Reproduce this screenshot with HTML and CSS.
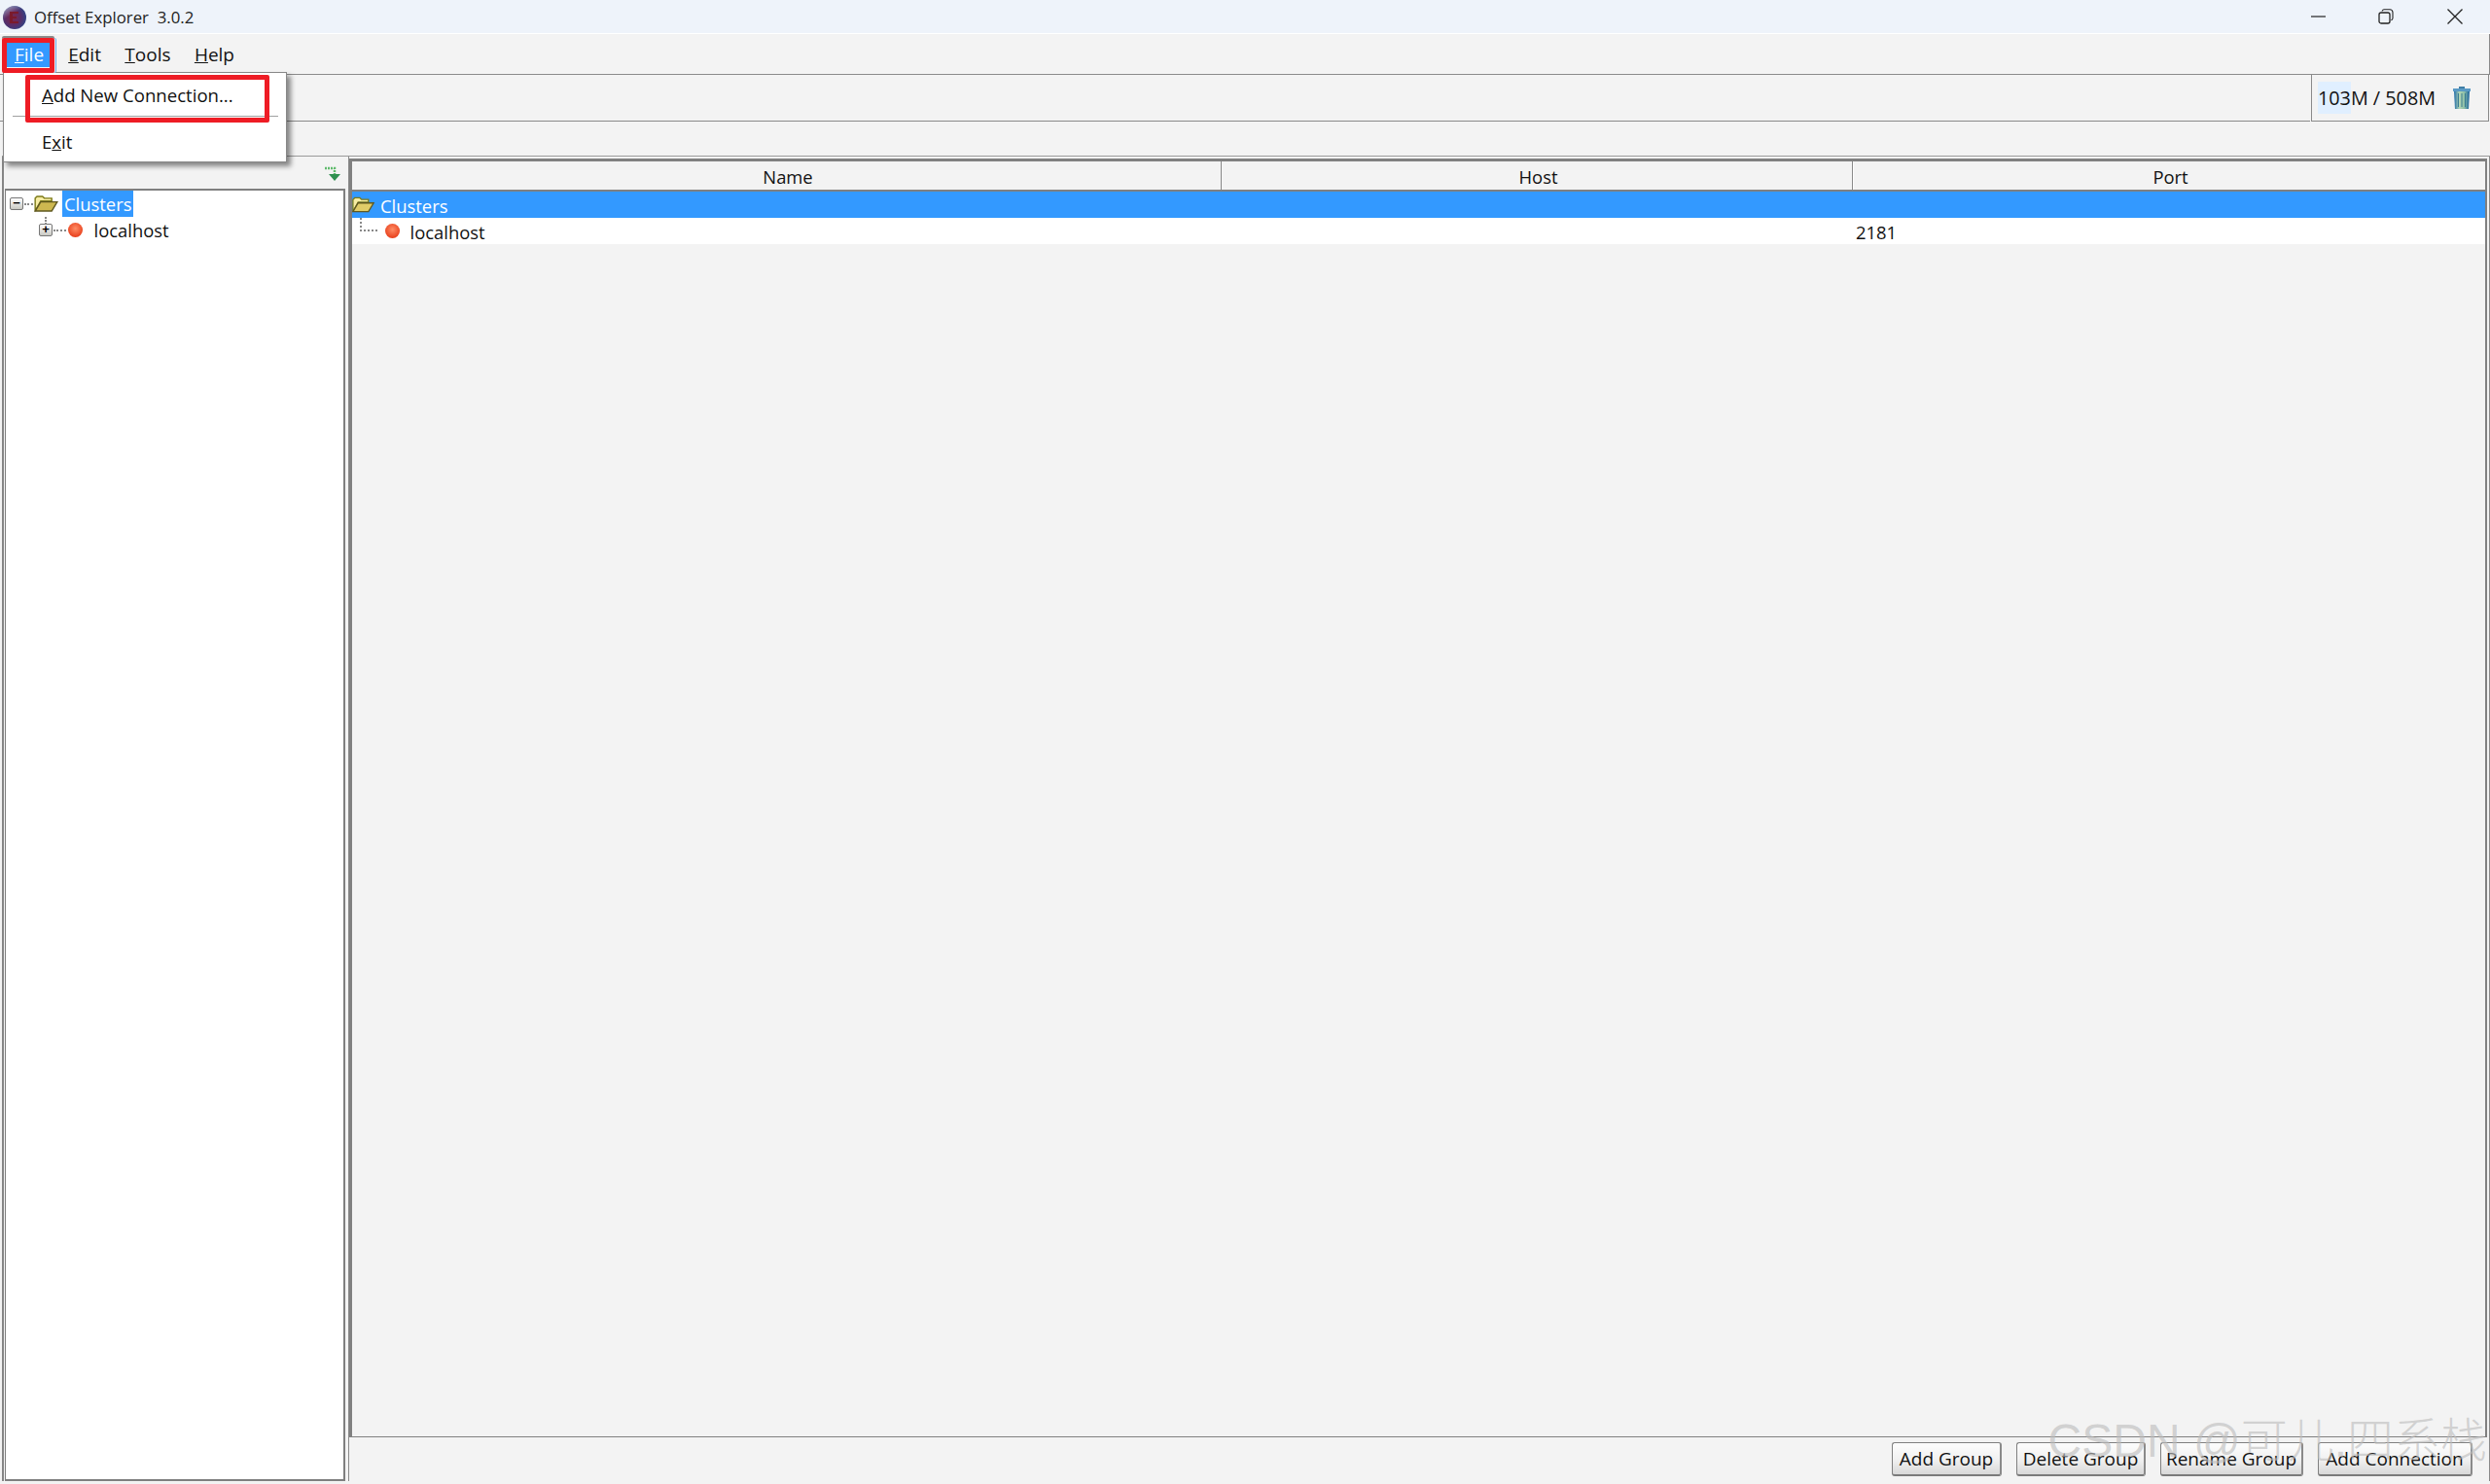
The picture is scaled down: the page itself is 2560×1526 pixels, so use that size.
FILE: index.html
```html
<!DOCTYPE html>
<html lang="en">
<head>
<meta charset="utf-8">
<title>Offset Explorer 3.0.2</title>
<link rel="stylesheet" href="styles.css">
</head>
<body>
<div class="app">
  <header class="titlebar">
    <svg class="app-icon" width="26" height="26" viewBox="0 0 26 26">
      <defs>
        <radialGradient id="orb" cx="0.42" cy="0.5" r="0.6"><stop offset="0" stop-color="#7d2648"/><stop offset="0.55" stop-color="#5a2c66"/><stop offset="1" stop-color="#2f4488"/></radialGradient>
        <linearGradient id="sheen" x1="0" y1="0" x2="0.6" y2="1"><stop offset="0" stop-color="#cfd6e6" stop-opacity=".75"/><stop offset="0.45" stop-color="#cfd6e6" stop-opacity="0"/></linearGradient>
      </defs>
      <circle cx="13" cy="13" r="12" fill="url(#orb)"/>
      <circle cx="13" cy="13" r="12" fill="url(#sheen)"/>
      <path d="M8 7h9v2h-6v3h4v2h-4v3h6v2H8z" fill="#7a1a2c"/>
    </svg>
    <span class="title-text">Offset Explorer&nbsp; 3.0.2</span>
    <div class="win-controls">
      <svg class="win-min" width="16" height="16" viewBox="0 0 16 16"><path d="M0 8h15" stroke="#222" stroke-width="1.200" fill="none"/></svg>
      <svg class="win-max" width="16" height="16" viewBox="0 0 16 16"><rect x="1" y="4" width="11" height="11" rx="2" stroke="#222" stroke-width="1.300" fill="none"/><path d="M4 2.500q.3-1.500 2-1.700h6q2.800 0 3 3v6q-.2 1.700-1.700 2" stroke="#222" stroke-width="1.100" fill="none"/></svg>
      <svg width="16" height="16" viewBox="0 0 16 16"><path d="M.5.500l15 15M15.500.500l-15 15" stroke="#222" stroke-width="1.300" fill="none"/></svg>
    </div>
  </header>

  <nav class="menubar">
    <span class="menu-item menu-active"><u>F</u>ile</span>
    <span class="menu-item"><u>E</u>dit</span>
    <span class="menu-item"><u>T</u>ools</span>
    <span class="menu-item"><u>H</u>elp</span>
  </nav>

  <div class="toolbar">
    <div class="toolbar-fill"></div>
    <div class="memory">
      <span class="memory-text"><span class="memory-used">103</span>M / 508M</span>
      <svg class="trash" width="18" height="23" viewBox="0 0 18 23">
        <defs><linearGradient id="bin" x1="0" x2="1"><stop offset="0" stop-color="#1f6ca8"/><stop offset="0.35" stop-color="#b4d6b4"/><stop offset="0.65" stop-color="#8fc0a8"/><stop offset="1" stop-color="#17609a"/></linearGradient></defs>
        <path d="M6 0h6v2H6z" fill="#3f7ea6"/>
        <path d="M0 2h18v3H0z" fill="#5a9ac4"/>
        <path d="M1 5h16l-1 18H2z" fill="url(#bin)"/>
        <path d="M5.500 7v14M9 7v14M12.500 7v14" stroke="#3a7c92" stroke-width="1"/>
      </svg>
    </div>
  </div>

  <main class="workspace">
    <aside class="left-pane">
      <div class="left-tools">
        <svg width="16" height="16" viewBox="0 0 16 16"><path d="M0 2h10v6" stroke="#5fbb6c" stroke-width="2.500" fill="none" stroke-dasharray="2 1"/><path d="M4 8h12l-6 7z" fill="#2f9050"/></svg>
      </div>
      <div class="tree">
        <div class="tree-row tree-root">
          <span class="expander">−</span>
          <span class="dots-h"></span>
          <svg class="folder" width="25" height="17" viewBox="0 0 26 18"><path d="M1 17V3l2-2h6l2 2h8v3H7L1 17z" fill="#f7eda4" stroke="#7c7a18" stroke-width="1.500"/><path d="M1 17l6-10h18l-6 10z" fill="#cdb850" stroke="#5f5820" stroke-width="1.500"/></svg>
          <span class="tree-label tree-selected">Clusters</span>
        </div>
        <div class="tree-row tree-child">
          <span class="expander">+</span>
          <span class="dots-h wide"></span>
          <span class="orb"></span>
          <span class="tree-label child-label">localhost</span>
        </div>
      </div>
    </aside>

    <section class="right-pane">
      <div class="table-box">
        <div class="table-head">
          <div class="th th-name">Name</div>
          <div class="th th-host">Host</div>
          <div class="th th-port">Port</div>
        </div>
        <div class="row row-selected">
          <svg class="folder" width="23" height="17" viewBox="0 0 26 18"><path d="M1 17V3l2-2h6l2 2h8v3H7L1 17z" fill="#f7eda4" stroke="#7c7a18" stroke-width="1.500"/><path d="M1 17l6-10h18l-6 10z" fill="#e0cc68" stroke="#5f5820" stroke-width="1.500"/></svg>
          <span class="row-name">Clusters</span>
        </div>
        <div class="row row-plain">
          <div class="cell-name">
            <span class="elbow"></span>
            <span class="orb"></span>
            <span class="row-name-child">localhost</span>
          </div>
          <span class="row-port">2181</span>
        </div>
      </div>
      <div class="button-bar">
        <button class="btn btn-1" type="button">Add Group</button>
        <button class="btn btn-2" type="button">Delete Group</button>
        <button class="btn btn-3" type="button">Rename Group</button>
        <button class="btn btn-4" type="button">Add Connection</button>
      </div>
    </section>
  </main>

  <div class="popup">
    <div class="popup-item first"><u>A</u>dd New Connection...</div>
    <div class="popup-sep"></div>
    <div class="popup-item second">E<u>x</u>it</div>
  </div>
  <div class="mark mark-file"></div>
  <div class="mark mark-add"></div>
  <div class="watermark">CSDN @可儿.四系栈</div>
</div>
</body>
</html>
```

FILE: styles.css
```css
* { box-sizing: border-box; }
html, body { margin: 0; padding: 0; }
body {
  width: 2560px;
  height: 1526px;
  overflow: hidden;
  background: #f3f3f3;
  font-family: "Open Sans", "Noto Sans", sans-serif;
  font-size: 19px;
  color: #111;
}
.app { position: relative; width: 2560px; height: 1526px; display: flex; flex-direction: column; }

.titlebar {
  height: 35px;
  background: #eef3fa;
  display: flex;
  align-items: center;
  padding-left: 2px;
  border-bottom: 1px solid #fff;
  flex: none;
}
.app-icon { flex: none; margin-top: 1px; }
.title-text { margin-left: 7px; font-size: 16.800px; color: #222; }
.win-controls { margin-left: auto; display: flex; padding-right: 28px; align-items: center; }
.win-min { margin-right: 53px; }
.win-max { margin-right: 55px; }

.menubar {
  height: 42px;
  flex: none;
  background: #f3f3f3;
  display: flex;
  align-items: center;
  padding-left: 2px;
  border-bottom: 1px solid #8a8a8a;
  border-right: 1px solid #8a8a8a;
}
.menu-item { padding: 0 12.200px; line-height: 26px; }
.menu-active { background: #3399ff; color: #fff; height: 26px; width: 44px; margin: 0 7px 0 5px; padding: 0 0 0 8px; }

.toolbar {
  height: 48px;
  flex: none;
  display: flex;
  padding-right: 1px;
}
.toolbar-fill { flex: 1; border-bottom: 1px solid #8a8a8a; }
.memory {
  width: 183px;
  border-left: 1px solid #8a8a8a;
  border-right: 1px solid #8a8a8a;
  border-bottom: 1px solid #8a8a8a;
  margin-left: 1px;
  display: flex;
  align-items: center;
  padding-left: 6px;
}
.memory-text { font-size: 19.800px; white-space: nowrap; }
.memory-used { background: #e0efff; display: inline-block; line-height: 33px; }
.trash { margin-left: 18px; flex: none; }

.workspace {
  flex: 1;
  display: flex;
  margin: 35px 0 3px 2px;
  min-height: 0;
  border-top: 1px solid #9a9a9a;
}

.left-pane {
  width: 353px;
  flex: none;
  border-left: 2px solid #858585;
  display: flex;
  flex-direction: column;
}
.left-tools { height: 33px; display: flex; justify-content: flex-end; align-items: flex-start; padding: 10px 5px 0 0; flex: none; }
.tree {
  flex: 1;
  background: #fff;
  margin-left: 1px;
  border: 1px solid #7f7f7f;
  border-top-width: 2px;
  border-right-width: 2px;
  border-bottom-width: 2px;
}
.tree-row { display: flex; align-items: center; height: 27px; position: relative; }
.tree-root { padding-left: 4px; }
.tree-child { padding-left: 34px; }
.tree-child::before {
  content: "";
  position: absolute;
  left: 40px; top: 0;
  height: 8px;
  border-left: 2px dotted #888;
}
.expander {
  width: 14px; height: 13px;
  border: 1px solid #777;
  border-radius: 2px;
  background: linear-gradient(#fff, #c9c9c3);
  font: 700 13px/10px "Liberation Sans", sans-serif;
  color: #000;
  text-align: center;
  flex: none;
}
.dots-h { width: 9px; border-top: 2px dotted #888; margin: 0 1px; flex: none; }
.dots-h.wide { width: 13px; margin-right: 2px; }
.folder { flex: none; }
.tree-label { font-size: 18.400px; line-height: 27px; }
.tree-selected { background: #3399ff; color: #fff; padding: 0 2px; margin-left: 4px; }
.child-label { margin-left: 11.500px; }

.orb {
  display: inline-block;
  width: 15px; height: 15px;
  border-radius: 50%;
  background: radial-gradient(circle at 50% 40%, #ff8d66, #e8401c 75%);
  flex: none;
}

.right-pane {
  flex: 1;
  margin-left: 3px;
  display: flex;
  flex-direction: column;
  min-width: 0;
  padding: 2px 2px 0 0;
  border-left: 1px solid #8a8a8a;
  border-right: 1px solid #8a8a8a;
}
.table-box {
  height: 1315px;
  border: 3px solid #808080;
  border-right-width: 2px;
  border-bottom-width: 1px;
  flex: none;
}
.table-head { display: flex; height: 31px; border-bottom: 2px solid #808080; }
.th { text-align: center; line-height: 31px; font-size: 18.400px; border-right: 1px solid #8a8a8a; padding-left: 3px; }
.th-name { width: 894px; }
.th-host { width: 649px; box-shadow: 1px 0 0 #fff; }
.th-port { flex: 1; border-right: 0; }
.row { display: flex; align-items: center; height: 27px; font-size: 18.400px; }
.row-selected { background: #3399ff; color: #fff; }
.row-name { margin-left: 6px; margin-top: 2px; }
.row-plain { background: #fff; }
.cell-name { flex: 0 0 1546px; display: flex; align-items: center; height: 27px; }
.elbow { width: 18px; height: 14px; margin-left: 8px; align-self: flex-start; border-left: 2px dotted #888; border-bottom: 2px dotted #888; flex: none; }
.cell-name .orb { margin-left: 8px; }
.row-name-child { margin-left: 10.500px; margin-top: 2px; }
.row-port { margin-top: 2px; }

.button-bar { display: flex; justify-content: flex-end; padding: 5px 15px 0 0; }
.btn {
  height: 35px;
  font-family: inherit;
  font-size: 19px;
  border: 1px solid #808080;
  border-bottom: 2px solid #7a7a7a;
  border-right: 2px solid #8a8a8a;
  border-radius: 3px;
  color: #111;
  background: linear-gradient(#fbfbfb 10%, #f0f0f0 55%, #d8d8d8);
  padding: 0;
  flex: none;
  white-space: nowrap;
}
.btn-1 { width: 113px; }
.btn-2 { width: 133px; margin-left: 15px; }
.btn-3 { width: 147px; margin-left: 15px; }
.btn-4 { width: 159px; margin-left: 15px; }

.popup {
  position: absolute;
  left: 3px; top: 74px;
  width: 292px; height: 93px;
  background: #fff;
  border: 1px solid #888;
  box-shadow: 4px 4px 5px rgba(0,0,0,.45);
  font-size: 18.600px;
  display: flex;
  flex-direction: column;
}
.popup-item { padding-left: 39px; line-height: 30px; }
.popup-item.first { margin-top: 8px; }
.popup-sep { height: 1px; background: #a0a0a0; margin: 6px 8px 0 9px; }
.popup-item.second { margin-top: 11px; }
.mark { position: absolute; border: 5px solid #ee1c25; border-radius: 2px; }
.mark-file {
  left: 2px; top: 39px;
  width: 54px; height: 36px;
  box-shadow: 0 -2px 0 #8a8a8a, 1px 0 0 #f3f3f3, 2px 0 0 #6aa9e8;
}
.mark-add { left: 26px; top: 77px; width: 251px; height: 49px; }
.watermark {
  position: absolute;
  right: 3px; top: 1458px;
  font-family: "Liberation Sans", "Noto Sans CJK SC", sans-serif;
  font-size: 48px;
  line-height: 48px;
  font-weight: 300;
  color: rgba(190,190,190,.65);
  white-space: nowrap;
}
```
